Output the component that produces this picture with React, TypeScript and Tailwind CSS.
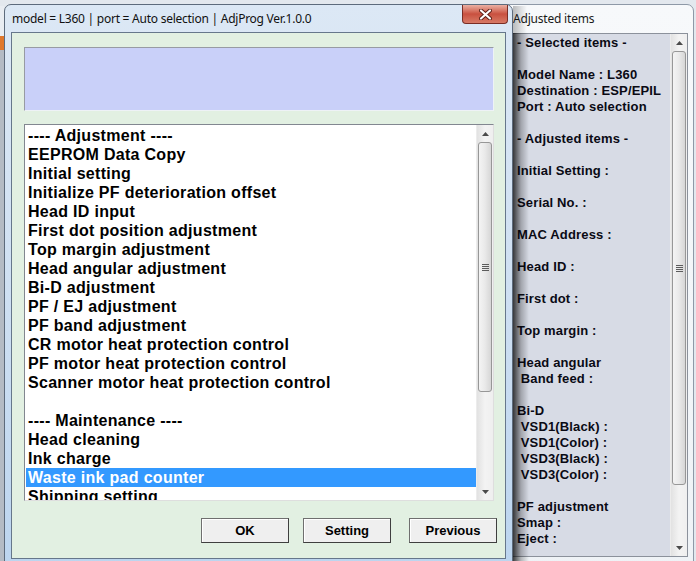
import React from 'react';

const listItems = [
  '---- Adjustment ----',
  'EEPROM Data Copy',
  'Initial setting',
  'Initialize PF deterioration offset',
  'Head ID input',
  'First dot position adjustment',
  'Top margin adjustment',
  'Head angular adjustment',
  'Bi-D adjustment',
  'PF / EJ adjustment',
  'PF band adjustment',
  'CR motor heat protection control',
  'PF motor heat protection control',
  'Scanner motor heat protection control',
  '',
  '---- Maintenance ----',
  'Head cleaning',
  'Ink charge',
  'Waste ink pad counter',
  'Shipping setting',
];

const reportLines = [
  '- Selected items -',
  '',
  'Model Name : L360',
  'Destination : ESP/EPIL',
  'Port : Auto selection',
  '',
  '- Adjusted items -',
  '',
  'Initial Setting :',
  '',
  'Serial No. :',
  '',
  'MAC Address :',
  '',
  'Head ID :',
  '',
  'First dot :',
  '',
  'Top margin :',
  '',
  'Head angular',
  ' Band feed :',
  '',
  'Bi-D',
  ' VSD1(Black) :',
  ' VSD1(Color) :',
  ' VSD3(Black) :',
  ' VSD3(Color) :',
  '',
  'PF adjustment',
  'Smap :',
  'Eject :',
];

const Arrow = ({ up }: { up?: boolean }) => (
  <div className="h-[17px] flex items-center justify-center">
    <svg width="7" height="4" viewBox="0 0 7 4">
      {up ? <path d="M0 4 L3.5 0 L7 4 Z" fill="#4a4a4a" /> : <path d="M0 0 L3.5 4 L7 0 Z" fill="#4a4a4a" />}
    </svg>
  </div>
);

// win7 style vertical scrollbar, thumb sits right under the up arrow
const ScrollBar = ({ thumb }: { thumb: number }) => (
  <div className="w-[17px] h-full flex flex-col bg-gradient-to-r from-[#e2e2e2] via-[#f3f3f3] to-[#efefef] border-l border-[#ececec]">
    <Arrow up />
    <div
      className="mx-[1px] rounded-[3px] border border-[#979797] bg-gradient-to-r from-[#f4f4f4] via-[#e9e9e9] to-[#d6d6d6] flex items-center justify-center"
      style={{ height: thumb }}
    >
      <div className="flex flex-col gap-[1px]">
        <div className="w-[7px] h-[1px] bg-[#5c5c5c]" />
        <div className="w-[7px] h-[1px] bg-[#5c5c5c]" />
        <div className="w-[7px] h-[1px] bg-[#5c5c5c]" />
        <div className="w-[7px] h-[1px] bg-[#5c5c5c]" />
      </div>
    </div>
    <div className="flex-1" />
    <Arrow />
  </div>
);

const WinButton = ({ label, className }: { label: string; className?: string }) => (
  <div
    className={
      'w-[88px] h-[25px] flex items-center justify-center bg-[#efefef] border border-[#6f6f6f] border-b-[#3f3f3f] border-r-[#3f3f3f] shadow-[inset_1px_1px_0_#ffffff] text-[13px] font-bold text-black ' +
      (className ?? '')
    }
  >
    {label}
  </div>
);

export default function App() {
  return (
    <div className="relative w-[696px] h-[561px] overflow-hidden bg-[#e3e8ee] font-['Liberation_Sans',Arial,sans-serif]">
      {/* window behind, left edge */}
      <div className="absolute left-0 top-[6px] w-[4px] h-[555px] bg-[#c3c9d1] flex flex-col">
        <div className="h-[30px] bg-[#e9edf2]" />
        <div className="h-[14px] bg-[#e0782c]" />
        <div className="flex-1 bg-[#b4bbc4]" />
      </div>

      {/* Adjusted items window (inactive, behind) */}
      <div className="absolute left-[480px] top-[4px] w-[214px] h-[600px] rounded-t-[7px] border border-[#8e99a7] bg-gradient-to-b from-[#f7f9fb] to-[#eef2f6] flex flex-col">
        <div className="h-[28px] pl-[32px] flex items-center text-[12px] text-[#1a1a1a] font-['Noto_Sans',sans-serif] tracking-[-0.2px]">
          Adjusted items
        </div>
        <div className="ml-[9px] mr-[5px] h-[524px] border border-[#8b919b] bg-[#d7dbe5] flex">
          <div className="flex-1 pl-[26px] pt-[1px] text-[13px] leading-[16px] font-bold text-[#0a0a14] whitespace-pre tracking-[0.15px]">
            {reportLines.map((l, i) => (
              <div key={i} className="h-[16px]">
                {l}
              </div>
            ))}
          </div>
          <ScrollBar thumb={434} />
        </div>
      </div>

      {/* shadow cast by the dialog */}
      <div className="absolute left-[513px] top-[6px] w-[14px] h-[27px] bg-gradient-to-r from-black/25 to-transparent" />
      <div className="absolute left-[513px] top-[33px] w-[16px] h-[528px] bg-gradient-to-r from-black/75 via-black/25 to-transparent" />

      {/* AdjProg dialog */}
      <div className="absolute left-[4px] top-[4px] w-[509px] h-[562px] rounded-t-[7px] border border-[#5d6b7c] bg-gradient-to-b from-[#dce8f5] via-[#cfe0f2] to-[#bcd5ef] flex flex-col">
        <div className="relative h-[27px] pl-[7px] flex items-center text-[12px] text-[#111] font-['Noto_Sans',sans-serif] tracking-[-0.25px]">
          model = L360 | port = Auto selection | AdjProg Ver.1.0.0
          <div className="absolute right-[4px] top-0 w-[46px] h-[19px] rounded-b-[4px] border border-t-0 border-[#7a2d24] bg-gradient-to-b from-[#eab0a3] via-[#c9503f] to-[#d77a66] flex items-center justify-center">
            <svg width="13" height="11" viewBox="0 0 13 11">
              <path d="M2 1.5 L11 9.5 M11 1.5 L2 9.5" stroke="#5a1e16" strokeWidth="4" strokeLinecap="round" />
              <path d="M2 1.5 L11 9.5 M11 1.5 L2 9.5" stroke="#ffffff" strokeWidth="2.2" strokeLinecap="round" />
            </svg>
          </div>
        </div>

        <div className="mx-[6px] flex-1 border border-[#66778b] bg-[#e2f0e2] flex flex-col pl-[12px] pt-[14px]">
          <div className="w-[470px] h-[64px] border border-[#979ba3] border-b-[#eef2f6] border-r-[#eef2f6] bg-[#c9d0f9]" />

          <div className="mt-[13px] w-[470px] h-[377px] border border-[#828790] border-b-[#dedede] border-r-[#dedede] bg-white flex">
            <div className="flex-1 pt-[1px] pl-[1px] overflow-hidden text-[16px] leading-[19px] font-bold text-black tracking-[0.3px]">
              {listItems.map((item, i) => (
                <div
                  key={i}
                  className={
                    'h-[19px] pl-[2px] whitespace-nowrap ' + (item === 'Waste ink pad counter' ? 'bg-[#3399ff] text-white' : '')
                  }
                >
                  {item}
                </div>
              ))}
            </div>
            <ScrollBar thumb={250} />
          </div>

          <div className="mt-[17px] flex pl-[177px]">
            <WinButton label="OK" />
            <WinButton label="Setting" className="ml-[14px] w-[87px]" />
            <WinButton label="Previous" className="ml-[18px]" />
          </div>
        </div>
        <div className="h-[6px]" />
      </div>
    </div>
  );
}
